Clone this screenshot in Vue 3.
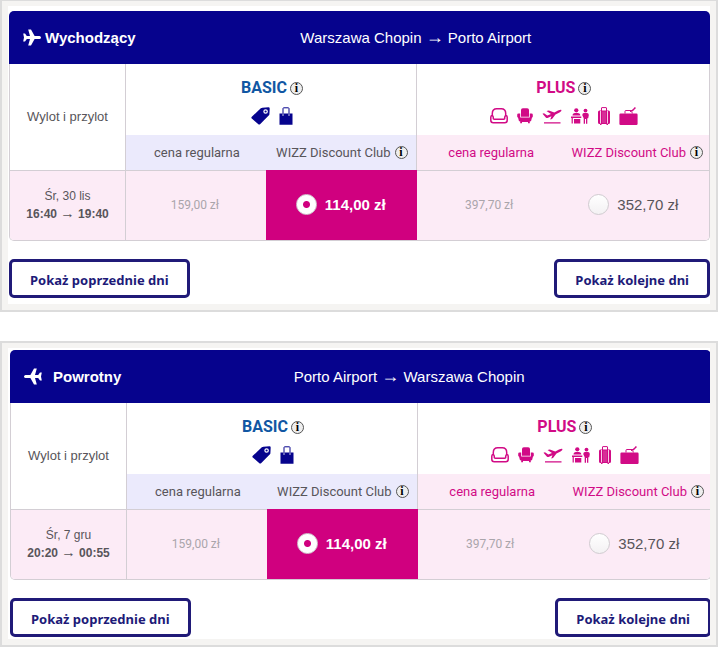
<script setup>
import { reactive } from 'vue'

const flights = reactive([
  { id: 'out', title: 'Wychodzący', from: 'Warszawa Chopin', to: 'Porto Airport', date: 'Śr, 30 lis', dep: '16:40', arr: '19:40', choice: 'basic' },
  { id: 'back', title: 'Powrotny', from: 'Porto Airport', to: 'Warszawa Chopin', date: 'Śr, 7 gru', dep: '20:20', arr: '00:55', choice: 'basic' },
])
</script>

<template>
  <main class="page">
    <section v-for="f in flights" :key="f.id" class="panel" :class="f.id">
      <div class="sheet">
        <div class="card">
          <header class="head">
            <svg class="plane" viewBox="0 0 18 18" width="18" height="18" aria-hidden="true">
              <path d="M18 8.500C18 7.500 16.900 7 15.700 7H11.600L8 .6H5.200L7 7H3.800L2 4.600H.2L1 8.500.2 12.400H2L3.800 10H7L5.200 16.400H8L11.600 10H15.700C16.900 10 18 9.500 18 8.500Z" fill="#fff" />
            </svg>
            <h2>{{ f.title }}</h2>
            <p class="route">{{ f.from }} <span class="arrow">→</span> {{ f.to }}</p>
          </header>
          <table>
            <colgroup>
              <col class="c-time" />
              <col class="c-b1" />
              <col class="c-b2" />
              <col class="c-p1" />
              <col class="c-p2" />
            </colgroup>
            <thead>
              <tr>
                <th rowspan="2" class="time-head line-r" scope="col">Wylot i przylot</th>
                <th colspan="2" class="tier basic line-r" scope="colgroup">
                  <div class="name">BASIC <button class="info" type="button" aria-label="Informacje o taryfie BASIC">i</button></div>
                  <div class="icons">
                    <svg viewBox="0 0 19 18" width="19" height="18" aria-hidden="true">
                      <path fill-rule="evenodd" d="M9.800 1.300Q10.500.7 11.400.7L17.500.3Q18.700.3 18.700 1.500L18.400 7.200Q18.300 8 17.700 8.600L9.300 16.900Q8.200 17.900 7.100 16.900L.8 11.600Q-.1 10.700.8 9.800ZM14.600 2.200A2.300 2.300 0 1 0 14.600 6.800 2.300 2.300 0 1 0 14.600 2.200Z" fill="#06038d" />
                      <circle cx="14.600" cy="4.500" r="1.100" fill="#06038d" />
                    </svg>
                    <svg viewBox="0 0 14 18" width="14" height="18" aria-hidden="true">
                      <path d="M.5 6.500H13.500V17.800H.5Z" fill="#06038d" />
                      <path d="M4 7.500V1.500Q4 .8 4.700 .8H9.300Q10 .8 10 1.500V7.500" fill="none" stroke="#06038d" />
                      <path d="M4 6.500V9M10 6.500V9" stroke="#fff" stroke-width=".8" />
                    </svg>
                  </div>
                </th>
                <th colspan="2" class="tier plus" scope="colgroup">
                  <div class="name">PLUS <button class="info" type="button" aria-label="Informacje o taryfie PLUS">i</button></div>
                  <div class="icons">
                    <svg viewBox="0 0 18 18" width="18" height="18" aria-hidden="true">
                      <path d="M2.300 8.500V6.500Q2.300 1.700 6.800 1.700H11.200Q15.700 1.700 15.700 6.500V8.500M3.400 12.200H14.600M3.400 12.200Q3.400 8.500 2 8.500 .8 8.800 .8 10.200V13.300Q.8 15.800 3.300 15.800H14.700Q17.200 15.800 17.200 13.300V10.200Q17.200 8.800 16 8.500 14.600 8.500 14.600 12.200" fill="none" stroke="#d10b86" stroke-width="1.500" />
                    </svg>
                    <svg viewBox="0 0 16 18" width="16" height="18" aria-hidden="true">
                      <path d="M4 3Q4 1.200 5.800 1.200H10.200Q12 1.200 12 3V9.700H4Z" fill="#d10b86" />
                      <path d="M.2 7.800Q.2 6.500 1.500 6.500H3.200V10.500H12.800V6.500H14.500Q15.800 6.500 15.800 7.800V9.500Q15.800 10.300 15 10.500L14 14.300H12.800V16.300H11V15H5V16.300H3.200V14.300H2L1 10.500Q.2 10.300.2 9.500Z" fill="#d10b86" />
                    </svg>
                    <svg viewBox="0 0 20 18" width="20" height="18" aria-hidden="true">
                      <path d="M.5 6.700 2 6.200 5.300 8.400 9 6.900 4.500 4 6.800 3.400 12.300 5.400 16 3.500Q18.800 2.200 19.500 2.900 19.700 4.200 17.500 5.400L13.500 7.400 10 11.900 8.200 12.400 9.500 9.300 5.500 10.900Q4.700 11.200 4 10.700Z" fill="#d10b86" />
                      <path d="M2 15.900H18.500" stroke="#d10b86" stroke-width="1.400" />
                    </svg>
                    <svg viewBox="0 0 18 18" width="18" height="18" aria-hidden="true">
                      <g fill="#d10b86">
                        <circle cx="5.300" cy="3.300" r="2.100" />
                        <path d="M1.500 8.600Q1.500 5.900 4 5.900H6.600Q9.300 5.900 9.300 8.600Z" />
                        <path d="M0 9.500H10.300V11H0Z" />
                        <path d="M.6 11H1.800V16.600H.6ZM3 12H9.300V16.600H3Z" />
                        <circle cx="14.500" cy="3.600" r="1.900" />
                        <path d="M12.800 5.900H16.200Q18 6.200 17.800 8.200L17.200 11.200H16.300V16.800H15V12H14V16.800H12.700V11.200L11.300 8.200Q11.100 6.200 12.800 5.900Z" />
                      </g>
                    </svg>
                    <svg viewBox="0 0 12 18" width="12" height="18" aria-hidden="true">
                      <path d="M1.500 3.500H10.500Q12 3.500 12 5V15.500Q12 17 10.500 17H10V18H8.500V17H3.500V18H2V17H1.500Q0 17 0 15.500V5Q0 3.500 1.500 3.500Z" fill="#d10b86" />
                      <path d="M3.500 4V1Q3.500.6 4 .6H8Q8.500.6 8.500 1V4" fill="none" stroke="#d10b86" />
                      <path d="M2.500 4V16.500M9.500 4V16.500" stroke="#fff" stroke-width=".8" />
                      <path d="M5 4.500V16M7 4.500V16" stroke="#fff" stroke-width=".3" />
                    </svg>
                    <svg viewBox="0 0 19 18" width="19" height="18" aria-hidden="true">
                      <path d="M1.500 6.500H17.500Q18.600 6.500 18.600 7.700V16.800Q18.600 18 17.500 18H1.500Q.4 18 .4 16.800V7.700Q.4 6.500 1.500 6.500Z" fill="#d10b86" />
                      <path d="M6 6.500V4.300Q6 3.500 7 3.500H12.500L13.300 6.500M11 4.900 13.500 2.800" fill="none" stroke="#d10b86" />
                      <path d="M12.500 3.700 15.800.1 17 1 13.800 4.300Z" fill="#d10b86" />
                    </svg>
                  </div>
                </th>
              </tr>
              <tr class="sub">
                <th class="basic" scope="col">cena regularna</th>
                <th class="basic line-r" scope="col">
                  <div class="club">WIZZ Discount Club <button class="info" type="button" aria-label="Informacje o WIZZ Discount Club">i</button></div>
                </th>
                <th class="plus" scope="col">cena regularna</th>
                <th class="plus" scope="col">
                  <div class="club">WIZZ Discount Club <button class="info" type="button" aria-label="Informacje o WIZZ Discount Club">i</button></div>
                </th>
              </tr>
            </thead>
            <tbody>
              <tr>
                <td class="when line-r">{{ f.date }}<br /><strong>{{ f.dep }} <span class="arrow">→</span> {{ f.arr }}</strong></td>
                <td class="regular">159,00 zł</td>
                <td class="offer line-r" :class="{ selected: f.choice === 'basic' }">
                  <label><input v-model="f.choice" type="radio" :name="f.id" value="basic" /><span>114,00 zł</span></label>
                </td>
                <td class="regular">397,70 zł</td>
                <td class="offer last" :class="{ selected: f.choice === 'plus' }">
                  <label><input v-model="f.choice" type="radio" :name="f.id" value="plus" /><span>352,70 zł</span></label>
                </td>
              </tr>
            </tbody>
          </table>
        </div>
        <nav class="days">
          <button type="button">Pokaż poprzednie dni</button>
          <button type="button">Pokaż kolejne dni</button>
        </nav>
      </div>
    </section>
  </main>
</template>

<style>
body {
  margin: 0;
  background: #fff;
}
</style>

<style scoped>
.page {
  display: flex;
  flex-direction: column;
  gap: 29px;
  padding-right: 9px;
  font-family: "Liberation Sans", Arial, sans-serif;
  color: #58555a;
}
.panel {
  border: 2px solid #dcdcdc;
  background: #f5f4f2;
  padding: 5px 6px 6px;
}
.panel.out {
  border-top-width: 1px;
}
.sheet {
  background: #fff;
  padding: 5px 0 6px 1px;
  overflow: hidden;
}
.back .sheet {
  padding: 2px 0 2px 2px;
}
.back .card,
.back .days {
  margin-right: -1px;
}
.head {
  display: flex;
  align-items: center;
  height: 53px;
  padding: 0 14px;
  border-radius: 5px 5px 0 0;
  background: #06038d;
  color: #fff;
}
.plane {
  flex: none;
}
.back .plane {
  transform: scaleX(-1);
}
h2 {
  margin: 0 0 0 4px;
  font-size: 15px;
  line-height: 20px;
}
.back h2 {
  margin-left: 11px;
}
.route {
  flex: 1;
  margin: 0;
  text-align: center;
  font-size: 15px;
  line-height: 20px;
}
.arrow {
  font-size: 1.2em;
  line-height: 1;
}
table {
  width: 100%;
  table-layout: fixed;
  border: 1px solid #d3ced4;
  border-top: 0;
  border-radius: 0 0 5px 5px;
  border-collapse: separate;
  border-spacing: 0;
  overflow: hidden;
}
.c-time { width: 16.600%; }
.c-b1 { width: 20%; }
.c-b2 { width: 21.600%; }
.c-p1 { width: 21%; }
th,
td {
  box-sizing: border-box;
  padding: 0;
  text-align: center;
  vertical-align: middle;
  font-weight: normal;
}
.line-r {
  border-right: 1px solid #d3ced4;
}
.time-head {
  font-size: 13px;
  padding-bottom: 2px;
}
.tier {
  height: 71px;
  padding: 14px 0 10px 2px;
}
.name {
  display: flex;
  align-items: center;
  justify-content: center;
  gap: 3px;
  font: bold 16px/20px Roboto, sans-serif;
}
.tier.basic { color: #1157a3; }
.tier.plus { color: #d10b86; }
.icons {
  display: flex;
  justify-content: center;
  gap: 9px;
  margin-top: 9px;
}
.icons svg {
  display: block;
}
.info {
  box-sizing: border-box;
  width: 13px;
  height: 13px;
  padding: 0;
  border: 1px solid #555;
  border-radius: 50%;
  background: #eee;
  color: #000;
  font: bold 12px/11px "Liberation Serif", serif;
  text-align: center;
}
.club {
  display: flex;
  align-items: center;
  justify-content: center;
  gap: 4px;
}
.sub th {
  height: 35px;
  padding-left: 2px;
  font: 13px/18px Roboto, sans-serif;
}
.sub .basic { background: #ebeafc; }
.sub .plus {
  background: #fcebf6;
  color: #d10b86;
}
td {
  height: 70px;
  border-top: 1px solid #d3ced4;
  background: #fcebf6;
}
.when {
  padding-bottom: 2px;
  font-size: 12px;
  line-height: 18px;
}
.regular {
  padding: 0 2px 2px 0;
  font: 12px/18px Roboto, sans-serif;
  color: #aaa5ab;
}
.offer {
  padding-bottom: 2px;
  font-size: 15px;
}
.offer.last {
  padding-right: 6px;
}
.offer.selected {
  background: #d0007f;
  border-color: #d0007f;
  color: #fff;
  font-weight: bold;
}
.offer label {
  display: flex;
  align-items: center;
  justify-content: center;
  gap: 8px;
  cursor: pointer;
}
.offer input {
  appearance: none;
  box-sizing: border-box;
  width: 21px;
  height: 21px;
  margin: 0;
  border: 1px solid #d0ccd0;
  border-radius: 50%;
  background: linear-gradient(#fff, #f3f1f3);
}
.offer input:checked {
  background: radial-gradient(circle, #d0007f 3px, #fff 4px);
}
.days {
  display: flex;
  justify-content: space-between;
  margin-top: 18px;
}
.days button {
  height: 39px;
  padding: 2px 18px 0;
  border: 3px solid #201a78;
  border-radius: 5px;
  background: #fff;
  color: #201a78;
  font: bold 13px/18px "Noto Sans", sans-serif;
}
</style>
